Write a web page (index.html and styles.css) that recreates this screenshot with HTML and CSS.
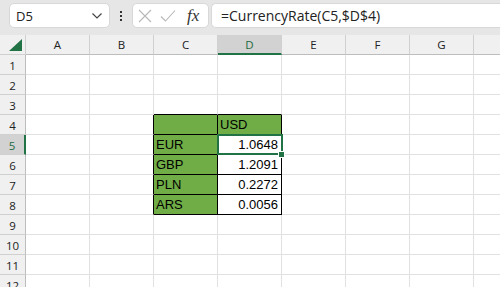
FILE: index.html
```html
<!DOCTYPE html>
<html>
<head>
<meta charset="utf-8">
<link rel="stylesheet" href="styles.css">
</head>
<body>
<div class="app">
  <div class="toolbar">
    <div class="namebox">
      <span class="name">D5</span>
      <svg class="chev" width="12" height="8" viewBox="0 0 12 8"><path d="M1.5 1.5 L6 6 L10.5 1.5" fill="none" stroke="#444" stroke-width="1.2"/></svg>
    </div>
    <div class="dots"><span></span><span></span><span></span></div>
    <div class="fxbox">
      <svg width="14" height="14" viewBox="0 0 14 14"><path d="M1 1 L13 13 M13 1 L1 13" stroke="#b8b8b8" stroke-width="1.1" fill="none"/></svg>
      <svg width="16" height="14" viewBox="0 0 16 14"><path d="M1 7.5 L5.5 12 L15 1.5" stroke="#b8b8b8" stroke-width="1.1" fill="none"/></svg>
      <span class="fx">fx</span>
    </div>
    <div class="formula">=CurrencyRate(C5,$D$4)</div>
  </div>
  <div class="grid">
    <div class="hd corner"><svg width="13" height="12" viewBox="0 0 13 12"><path d="M0 12 L13 0 L13 12 Z" fill="#217346"/></svg></div>
    <div class="hd col">A</div><div class="hd col">B</div><div class="hd col">C</div><div class="hd col sel">D</div><div class="hd col">E</div><div class="hd col">F</div><div class="hd col">G</div><div class="hd col"></div>

    <div class="hd row">1</div><div class="c"></div><div class="c"></div><div class="c"></div><div class="c"></div><div class="c"></div><div class="c"></div><div class="c"></div><div class="c"></div>
    <div class="hd row">2</div><div class="c"></div><div class="c"></div><div class="c"></div><div class="c"></div><div class="c"></div><div class="c"></div><div class="c"></div><div class="c"></div>
    <div class="hd row">3</div><div class="c"></div><div class="c"></div><div class="c tt"></div><div class="c tt"></div><div class="c"></div><div class="c"></div><div class="c"></div><div class="c"></div>
    <div class="hd row">4</div><div class="c"></div><div class="c tl"></div><div class="c t g"></div><div class="c t g">USD</div><div class="c"></div><div class="c"></div><div class="c"></div><div class="c"></div>
    <div class="hd row rsel">5</div><div class="c"></div><div class="c tl"></div><div class="c t g">EUR</div><div class="c t num active">1.0648<span class="handle"></span></div><div class="c"></div><div class="c"></div><div class="c"></div><div class="c"></div>
    <div class="hd row">6</div><div class="c"></div><div class="c tl"></div><div class="c t g">GBP</div><div class="c t num">1.2091</div><div class="c"></div><div class="c"></div><div class="c"></div><div class="c"></div>
    <div class="hd row">7</div><div class="c"></div><div class="c tl"></div><div class="c t g">PLN</div><div class="c t num">0.2272</div><div class="c"></div><div class="c"></div><div class="c"></div><div class="c"></div>
    <div class="hd row">8</div><div class="c"></div><div class="c tl"></div><div class="c t g">ARS</div><div class="c t num">0.0056</div><div class="c"></div><div class="c"></div><div class="c"></div><div class="c"></div>
    <div class="hd row">9</div><div class="c"></div><div class="c"></div><div class="c"></div><div class="c"></div><div class="c"></div><div class="c"></div><div class="c"></div><div class="c"></div>
    <div class="hd row">10</div><div class="c"></div><div class="c"></div><div class="c"></div><div class="c"></div><div class="c"></div><div class="c"></div><div class="c"></div><div class="c"></div>
    <div class="hd row">11</div><div class="c"></div><div class="c"></div><div class="c"></div><div class="c"></div><div class="c"></div><div class="c"></div><div class="c"></div><div class="c"></div>
    <div class="hd row">12</div><div class="c"></div><div class="c"></div><div class="c"></div><div class="c"></div><div class="c"></div><div class="c"></div><div class="c"></div><div class="c"></div>
  </div>
</div>
</body>
</html>
```
FILE: styles.css
```css
html, body { margin: 0; padding: 0; }
body { width: 500px; height: 287px; overflow: hidden; background: #fff; font-family: "Open Sans", "Noto Sans", sans-serif; }
.app { width: 500px; height: 287px; overflow: hidden; }
.toolbar {
  height: 35px; background: #e6e6e6; box-sizing: border-box;
  display: flex; align-items: flex-start; padding: 3px 0 0 9px;
}
.namebox {
  width: 101px; height: 25px; box-sizing: border-box; background: #fff;
  border: 1px solid #d8d8d8; border-radius: 5px;
  display: flex; align-items: center; justify-content: space-between; padding: 0 6px 0 6px;
}
.name { font-size: 13px; color: #222; }
.chev { margin-top: 1px; }
.dots { width: 22px; height: 25px; display: flex; flex-direction: column; align-items: center; justify-content: center; gap: 2px; }
.dots span { width: 2px; height: 2px; background: #333; display: block; }
.fxbox {
  width: 77px; height: 25px; box-sizing: border-box; background: #fff;
  border: 1px solid #d8d8d8; border-radius: 5px;
  display: flex; align-items: center; padding: 0 6px 0 5px; gap: 8px;
}
.fx { font-family: "Liberation Serif", serif; font-style: italic; font-size: 17px; color: #333; margin-left: 3px; }
.formula {
  flex: 1; margin-left: 2px; height: 25px; box-sizing: border-box; background: #fff;
  border: 1px solid #d8d8d8; border-right: none; border-radius: 5px 0 0 5px;
  font-size: 14px; color: #222; line-height: 23px; padding-left: 9px;
}
.grid {
  display: grid; grid-template-columns: 26px repeat(8, 64px); grid-auto-rows: 20px;
  width: 538px;
}
.hd {
  background: #f0f0f0; border-right: 1px solid #d0d0d0; border-bottom: 1px solid #d0d0d0;
  box-sizing: border-box; font-size: 11.5px; color: #222;
  display: flex; align-items: center; justify-content: center;
}
.corner { justify-content: flex-end; align-items: flex-end; padding: 0 3px 3px 0; }
.corner svg { display: block; }
.col { border-bottom: 1px solid #bdbdbd; }
.row { border-right: 1px solid #bdbdbd; padding-top: 1px; }
.col.sel { background: #d2d2d2; border-bottom: 2px solid #217346; color: #1e6b40; }
.row.rsel { background: #d2d2d2; border-right: 2px solid #217346; color: #1e6b40; }
.c {
  border-right: 1px solid #e1e1e1; border-bottom: 1px solid #e1e1e1; box-sizing: border-box;
  font-family: "Liberation Sans", sans-serif; font-size: 13px; color: #000;
  display: flex; align-items: flex-end; padding: 0 2px 2px 2px; position: relative;
}
.tt { border-bottom-color: #000; }
.tl { border-right-color: #000; }
.t { border-right-color: #000; border-bottom-color: #000; }
.g { background: #70ad47; }
.num { justify-content: flex-end; padding-right: 3px; }
.active::after {
  content: ""; position: absolute; left: -1px; top: -1px; right: -2px; bottom: -1px;
  border: 2px solid #217346; pointer-events: none;
}
.handle { position: absolute; right: -4px; bottom: -4px; width: 5px; height: 5px; background: #217346; border: 1px solid #fff; z-index: 2; }
```
